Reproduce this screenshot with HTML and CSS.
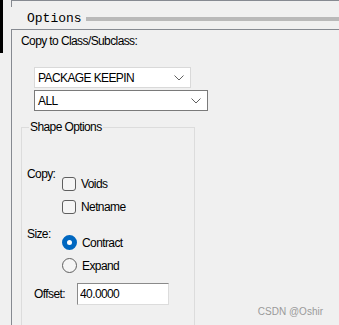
FILE: index.html
```html
<!DOCTYPE html>
<html lang="en">
<head>
  <meta charset="UTF-8" />
  <title>Options</title>
  <link rel="stylesheet" href="styles.css">
</head>
<body>
  <div class="window">
    <div class="edge"></div>
    <div class="main">
      <div class="prev"></div>

      <div class="title-row">
        <span class="title">Options</span>
        <span class="title-line"></span>
      </div>

      <div class="panel">
        <div class="panel-label">Copy to Class/Subclass:</div>

        <div class="combos">
          <div class="combo combo-class">
            <span>PACKAGE KEEPIN</span>
            <svg class="chevron" width="10" height="6" viewBox="0 0 10 6"><path d="M0.5 0.5 L5 5 L9.5 0.5" fill="none" stroke="#606060" stroke-width="1"/></svg>
          </div>
          <div class="combo combo-sub">
            <span>ALL</span>
            <svg class="chevron" width="10" height="6" viewBox="0 0 10 6"><path d="M0.5 0.5 L5 5 L9.5 0.5" fill="none" stroke="#606060" stroke-width="1"/></svg>
          </div>
        </div>

        <fieldset class="shape">
          <legend>Shape Options</legend>

          <div class="opt-block copy-block">
            <span class="opt-label">Copy:</span>
            <div class="opt-list">
              <label class="opt"><input type="checkbox" class="check" /> Voids</label>
              <label class="opt"><input type="checkbox" class="check" /> Netname</label>
            </div>
          </div>

          <div class="opt-block size-block">
            <span class="opt-label">Size:</span>
            <div class="opt-list">
              <label class="opt"><input type="radio" name="size" class="radio" checked /> Contract</label>
              <label class="opt"><input type="radio" name="size" class="radio" /> Expand</label>
            </div>
          </div>

          <div class="offset-row">
            <span class="offset-label">Offset:</span>
            <input type="text" class="offset-input" value="40.0000" />
          </div>
        </fieldset>
      </div>
    </div>
  </div>

  <div class="watermark">CSDN @Oshir</div>
</body>
</html>
```

FILE: styles.css
```css
body {
  margin: 0;
  width: 339px;
  height: 325px;
  overflow: hidden;
  background-color: #f0f0f0;
  color: #000;
  font-family: 'Liberation Sans', Arial, sans-serif;
  font-size: 12px;
  letter-spacing: -0.6px;
}

.window {
  display: flex;
}

.edge {
  width: 3px;
  height: 53px;
  background-color: #000;
  flex-shrink: 0;
}

.main {
  flex: 1;
  padding-left: 8px;
}

.prev {
  height: 6px;
  border-top: 1px solid #868a91;
  border-left: 1px solid #868a91;
}

.title-row {
  display: flex;
  align-items: center;
  height: 22px;
  padding-left: 16px;
}

.title {
  font-family: 'Liberation Mono', 'Courier New', monospace;
  font-size: 13px;
  letter-spacing: 0;
}

.title-line {
  flex: 1;
  height: 4px;
  margin: 2px 0 0 4px;
  background-color: #b9b9b9;
}

.panel {
  border-top: 1px solid #868a91;
  border-left: 1px solid #868a91;
  padding: 4px 0 0 9px;
}

.panel-label {
  line-height: 14px;
}

.combos {
  margin: 19px 0 0 13px;
}

.combo {
  box-sizing: border-box;
  height: 21px;
  display: flex;
  align-items: center;
  justify-content: space-between;
  padding: 0 6px 0 3px;
  background-color: #fff;
  border: 1px solid #d9d9d9;
}

.combo-class {
  width: 157px;
}

.combo-sub {
  width: 174px;
  margin-top: 2px;
  border-color: #7a7a7a;
}

.shape {
  box-sizing: border-box;
  width: 174px;
  margin: 9px 0 0 0;
  padding: 0 0 60px 5px;
  border: 1px solid #dcdcdc;
}

.shape legend {
  margin-left: 2px;
  padding: 0 1px;
  line-height: 14px;
}

.opt-block {
  display: grid;
  grid-template-columns: 35px 1fr;
  line-height: 14px;
}

.copy-block {
  margin-top: 33px;
}

.size-block {
  margin-top: 9px;
}

.opt-list {
  padding-top: 4px;
}

.copy-block .opt-list {
  padding-top: 5px;
}

.opt {
  display: flex;
  align-items: center;
  height: 23px;
  gap: 5px;
}

.check,
.radio {
  appearance: none;
  margin: 0;
  box-sizing: border-box;
  flex-shrink: 0;
}

.check {
  width: 14px;
  height: 14px;
  border: 1px solid #5f5f5f;
  border-radius: 3px;
  background-color: #f5f5f5;
}

.radio {
  width: 15px;
  height: 15px;
  border: 1px solid #5f5f5f;
  border-radius: 50%;
  background-color: #f5f5f5;
}

.radio:checked {
  border: 5px solid #0067c0;
  background-color: #fff;
}

.offset-row {
  display: flex;
  align-items: center;
  margin-top: 6px;
  padding-left: 7px;
}

.offset-label {
  width: 43px;
}

.offset-input {
  box-sizing: border-box;
  width: 92px;
  height: 22px;
  margin: 0;
  padding: 0 2px;
  font-family: inherit;
  font-size: 12px;
  letter-spacing: -0.6px;
  color: #000;
  background-color: #fff;
  border: 1px solid;
  border-color: #8a8a8a #dcdcdc #dcdcdc #8a8a8a;
  outline: none;
}

.watermark {
  position: absolute;
  right: 16px;
  bottom: 8px;
  font-size: 10px;
  letter-spacing: 0;
  color: #9a9a9a;
}
```
